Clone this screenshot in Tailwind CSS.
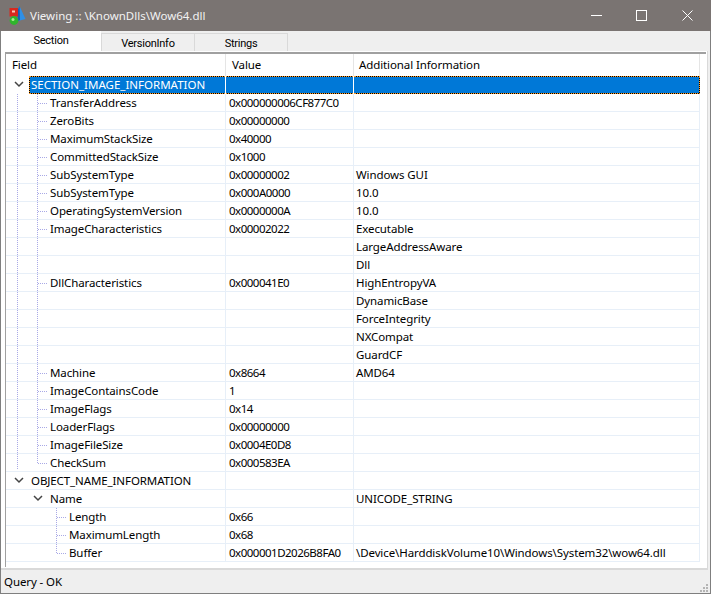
<!doctype html>
<html>
<head>
<meta charset="utf-8">
<script src="https://cdn.jsdelivr.net/npm/@tailwindcss/browser@4"></script>
</head>
<body class="m-0 overflow-hidden bg-[#efefef]">
<div class="w-[711px] h-[594px] flex flex-col border border-[#7f7f7f] border-t-0 bg-[#efefef] font-['Noto_Sans',sans-serif] text-[11.5px] leading-[18px] tracking-[-0.1px] text-black">
  <div class="h-[31px] shrink-0 -mx-px bg-[#7a7472] flex items-center text-[#f2f2f2]">
    <svg class="ml-[9px] mt-[1px] w-[17px] h-[20px]" viewBox="0 0 17 20"><path d="M10.5 0 L16.5 13 L9 15 L8 6 Z" fill="#2f8fe6"/><path d="M10.5 0 L8 6 L9 15 L11 14 Z" fill="#1560b5"/><rect x="0.5" y="2" width="8.5" height="8.5" fill="#d8281e"/><rect x="3" y="4.5" width="3" height="2" fill="#f6c9b8"/><circle cx="5" cy="14.5" r="4.4" fill="#2fb52c"/><circle cx="4" cy="13.5" r="1.5" fill="#a7ec8f"/></svg>
    <span class="ml-[4px] tracking-[0px]">Viewing :: \KnownDlls\Wow64.dll</span>
    <div class="ml-auto flex items-center">
      <svg class="w-[11px] h-[11px] mr-[34px]" viewBox="0 0 11 11"><rect x="0" y="5" width="11" height="1" fill="#fff"/></svg>
      <svg class="w-[11px] h-[11px] mr-[35px]" viewBox="0 0 11 11"><rect x="0.5" y="0.5" width="10" height="10" fill="none" stroke="#fff"/></svg>
      <svg class="w-[11px] h-[11px] mr-[18px]" viewBox="0 0 11 11"><path d="M0.5 0.5 L10.5 10.5 M10.5 0.5 L0.5 10.5" stroke="#fff" fill="none"/></svg>
    </div>
  </div>

  <div class="h-[21px] shrink-0 flex items-end font-['Roboto',sans-serif] text-[11px] tracking-[-0.25px]">
    <div class="w-[100px] h-[21px] bg-white text-center leading-[20px] relative z-10">Section</div>
    <div class="w-[94px] h-[19px] bg-[#efefef] border border-b-0 border-[#d9d9d9] text-center leading-[20px]">VersionInfo</div>
    <div class="w-[94px] h-[19px] -ml-px bg-[#efefef] border border-b-0 border-[#d9d9d9] text-center leading-[20px]">Strings</div>
  </div>

  <div class="h-[519px] shrink-0 w-[707px] bg-white border-r border-b-2 border-[#d9d9d9] pl-[4px] pr-[1px] pb-[3px] -mt-px">
    <div class="relative w-[701px] h-[515px] mt-px border-l border-t-2 border-[#a0a0a0] overflow-hidden">
      <div class="flex h-[22px] items-center">
        <div class="w-[220px] h-full pl-[6px] border-r border-[#e5e5e5] leading-[21px]">Field</div>
        <div class="w-[128px] h-full pl-[6px] border-r border-[#e5e5e5] leading-[21px]">Value</div>
        <div class="w-[346px] h-full pl-[5px] border-r border-[#e5e5e5] leading-[21px]">Additional Information</div>
      </div>
      <div class="grid grid-cols-[220px_128px_346px] auto-rows-[18px] w-[694px] [&>div]:border-b [&>div]:border-r [&>div]:border-[#e7eff8] [&>div]:whitespace-nowrap [&>div]:h-[18px] [&>div]:leading-[17px] [&>div:nth-child(3n+2)]:pl-[3px] [&>div:nth-child(3n+2)]:tracking-[-0.5px] [&>div:nth-child(3n)]:pl-[2px]">
        <div class="relative pl-[25px] !border-r-white !border-b-0"><svg class="absolute left-[8px] top-[5px] w-[10px] h-[7px]" viewBox="0 0 10 7"><path d="M1 1 L5 5 L9 1" fill="none" stroke="#444" stroke-width="1.5"/></svg><span class="absolute left-[23px] right-0 top-0 h-[18px] bg-black border border-r-0 border-dotted border-[#ff9a1f]"><span class="block h-full bg-[#0078d7] text-white pl-[1px] leading-[15px] tracking-[0px]">SECTION_IMAGE_INFORMATION</span></span></div>
        <div class="relative !border-r-white !border-b-0 !pl-0"><span class="block h-[18px] bg-black border-y border-dotted border-[#ff9a1f]"><span class="block h-full bg-[#0078d7]"></span></span></div>
        <div class="relative !border-r-0 !border-b-0 !pl-0"><span class="block h-[18px] bg-black border border-l-0 border-dotted border-[#ff9a1f]"><span class="block h-full bg-[#0078d7]"></span></span></div>

        <div class="pl-[44px]">TransferAddress</div><div>0x000000006CF877C0</div><div></div>
        <div class="pl-[44px]">ZeroBits</div><div>0x00000000</div><div></div>
        <div class="pl-[44px]">MaximumStackSize</div><div>0x40000</div><div></div>
        <div class="pl-[44px]">CommittedStackSize</div><div>0x1000</div><div></div>
        <div class="pl-[44px]">SubSystemType</div><div>0x00000002</div><div>Windows GUI</div>
        <div class="pl-[44px]">SubSystemType</div><div>0x000A0000</div><div>10.0</div>
        <div class="pl-[44px]">OperatingSystemVersion</div><div>0x0000000A</div><div>10.0</div>
        <div class="pl-[44px]">ImageCharacteristics</div><div>0x00002022</div><div>Executable</div>
        <div></div><div></div><div>LargeAddressAware</div>
        <div></div><div></div><div>Dll</div>
        <div class="pl-[44px]">DllCharacteristics</div><div>0x000041E0</div><div>HighEntropyVA</div>
        <div></div><div></div><div>DynamicBase</div>
        <div></div><div></div><div>ForceIntegrity</div>
        <div></div><div></div><div>NXCompat</div>
        <div></div><div></div><div>GuardCF</div>
        <div class="pl-[44px]">Machine</div><div>0x8664</div><div>AMD64</div>
        <div class="pl-[44px]">ImageContainsCode</div><div>1</div><div></div>
        <div class="pl-[44px]">ImageFlags</div><div>0x14</div><div></div>
        <div class="pl-[44px]">LoaderFlags</div><div>0x00000000</div><div></div>
        <div class="pl-[44px]">ImageFileSize</div><div>0x0004E0D8</div><div></div>
        <div class="pl-[44px]">CheckSum</div><div>0x000583EA</div><div></div>

        <div class="relative pl-[25px]"><svg class="absolute left-[8px] top-[5px] w-[10px] h-[7px]" viewBox="0 0 10 7"><path d="M1 1 L5 5 L9 1" fill="none" stroke="#444" stroke-width="1.5"/></svg>OBJECT_NAME_INFORMATION</div><div></div><div></div>
        <div class="relative pl-[44px]"><svg class="absolute left-[27px] top-[5px] w-[10px] h-[7px]" viewBox="0 0 10 7"><path d="M1 1 L5 5 L9 1" fill="none" stroke="#444" stroke-width="1.5"/></svg>Name</div><div></div><div>UNICODE_STRING</div>
        <div class="pl-[63px]">Length</div><div>0x66</div><div></div>
        <div class="pl-[63px]">MaximumLength</div><div>0x68</div><div></div>
        <div class="pl-[63px]">Buffer</div><div>0x000001D2026B8FA0</div><div>\Device\HarddiskVolume10\Windows\System32\wow64.dll</div>
      </div>
      <svg class="absolute left-0 top-0 w-[60px] h-[515px] pointer-events-none" viewBox="0 0 60 515" shape-rendering="crispEdges" stroke="#a9a9e6" stroke-dasharray="1 1" fill="none">
        <path d="M11.5 40 V416 M31.5 40 V409 M50.5 454 V499"/>
        <path d="M32 49.5 H42 M32 67.5 H42 M32 85.5 H42 M32 103.5 H42 M32 121.5 H42 M32 139.5 H42 M32 157.5 H42 M32 175.5 H42 M32 229.5 H42 M32 319.5 H42 M32 337.5 H42 M32 355.5 H42 M32 373.5 H42 M32 391.5 H42 M32 409.5 H42 M51 463.5 H61 M51 481.5 H61 M51 499.5 H61"/>
      </svg>
    </div>
  </div>

  <div class="flex-1 relative px-[3px] leading-[24px]">Query - OK
    <svg class="absolute right-[1px] bottom-[1px] w-[9px] h-[9px]" viewBox="0 0 9 9" fill="#b4b4b4"><rect x="6" y="0" width="2" height="2"/><rect x="3" y="3" width="2" height="2"/><rect x="6" y="3" width="2" height="2"/><rect x="0" y="6" width="2" height="2"/><rect x="3" y="6" width="2" height="2"/><rect x="6" y="6" width="2" height="2"/></svg>
  </div>
</div>
</body>
</html>
